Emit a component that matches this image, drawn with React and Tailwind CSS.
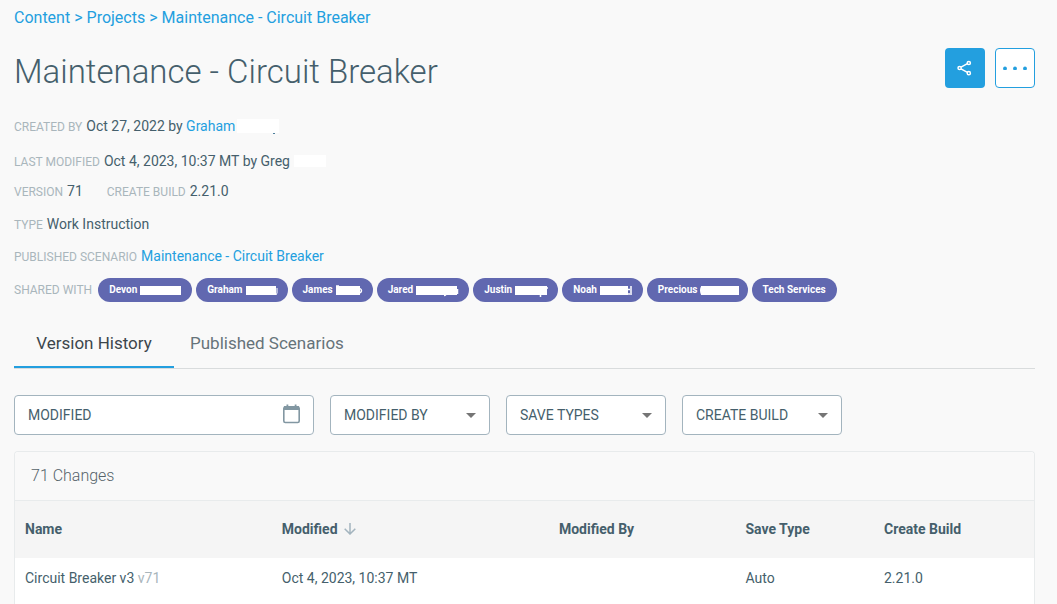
// src/App.jsx
import React, { useState } from 'react';

const sharedWith = [
  { name: 'Devon', mask: 41 },
  { name: 'Graham', mask: 30, tail: <path d="M31 2v5l-1 2" stroke="currentColor" strokeWidth="1" fill="none" />, extra: 1 },
  { name: 'James', mask: 24, tail: <path d="M24 2.500q3 2 0 4.500M0 0h3" stroke="currentColor" strokeWidth="1.500" fill="none" />, extra: 2 },
  { name: 'Jared', mask: 41, tail: <path d="M41.500 3v5M28 9.500q2 0 2-2" stroke="currentColor" strokeWidth="1.500" fill="none" />, extra: 1 },
  { name: 'Justin', mask: 32, tail: <path d="M25.500 8v3M32 1v2" stroke="currentColor" strokeWidth="1.500" fill="none" />, extra: 0 },
  { name: 'Noah', mask: 28, tail: <path d="M31 0v9M28 3.500h2M28 8h2" stroke="currentColor" strokeWidth="1.500" fill="none" />, extra: 4 },
  { name: 'Precious', mask: 38, tail: <path d="M0.500 1q-1.500 3 0 7" stroke="currentColor" strokeWidth="1.500" fill="none" />, extra: -2 },
  { name: 'Tech Services' },
];

const selects = ['MODIFIED BY', 'SAVE TYPES', 'CREATE BUILD'];

const changes = [
  { name: 'Circuit Breaker v3', version: 'v71', modified: 'Oct 4, 2023, 10:37 MT', by: '', saveType: 'Auto', build: '2.21.0' },
];

const Label = ({ children }) => <span className="mr-1 text-xs text-[#a9b6bc]">{children}</span>;

const Chip = ({ name, mask, tail, extra = 0 }) => (
  <li className="flex h-6 items-center gap-[3px] rounded-full bg-[#6168b0] px-[11px] text-[10px] font-bold text-white">
    {name}
    {mask && (
      <svg width={mask + extra} height="9" className="overflow-visible" aria-hidden="true">
        <rect width={mask} height="9" fill="currentColor" />
        {tail}
      </svg>
    )}
  </li>
);

const FilterSelect = ({ label }) => (
  <div className="relative w-40">
    <select
      aria-label={label}
      className="h-10 w-full appearance-none rounded-[4px] border border-[#a3b4be] bg-white px-[13px] text-sm text-[#455f6c]"
    >
      <option>{label}</option>
    </select>
    <svg className="pointer-events-none absolute top-[18px] right-3.5" width="10" height="5" viewBox="0 0 10 5" aria-hidden="true">
      <path d="M0 0h10L5 5z" fill="#757575" />
    </svg>
  </div>
);

const App = () => {
  const [activeTab, setActiveTab] = useState('history'); // 'history' or 'scenarios'

  const tabClass = (tab) =>
    `h-[50px] border-b-2 px-4 pt-0.5 text-[17px] ${
      activeTab === tab ? 'min-w-[160px] border-[#239fdf] text-[#3c464c]' : 'border-transparent text-[#66737a]'
    }`;

  return (
    <div className="flex min-h-screen flex-col bg-[#f9f9f9] pr-[22px] pl-3.5 font-['Roboto',sans-serif] text-sm text-[#455f6c]">
      <nav className="flex gap-1 pt-1.5 text-base text-[#239fdf]">
        <a href="#content">Content</a>
        <span>&gt;</span>
        <a href="#projects">Projects</a>
        <span>&gt;</span>
        <a href="#project">Maintenance - Circuit Breaker</a>
      </nav>

      <header className="mt-[18px] flex items-start justify-between">
        <h1 className="text-[33px] leading-[48px] font-light">Maintenance - Circuit Breaker</h1>
        <div className="flex gap-2.5">
          <button aria-label="Share" className="flex size-10 items-center justify-center rounded-[4px] bg-[#239fdf] text-white">
            <svg width="16" height="16" viewBox="0 0 16 16" fill="none" stroke="currentColor" strokeWidth="1.500">
              <circle cx="2.600" cy="8" r="1.600" />
              <circle cx="11.800" cy="3" r="1.600" />
              <circle cx="11.800" cy="13.200" r="1.600" />
              <path d="M4 7.200l6.400-3.500M4 8.800l6.400 3.600" />
            </svg>
          </button>
          <button aria-label="More" className="flex size-10 items-center justify-center rounded-[4px] border border-[#239fdf] bg-white text-[#239fdf]">
            <svg width="24" height="4" viewBox="0 0 24 4" fill="currentColor">
              <circle cx="2" cy="2.500" r="1.900" />
              <circle cx="12" cy="2.500" r="1.900" />
              <circle cx="22" cy="2.500" r="1.900" />
            </svg>
          </button>
        </div>
      </header>

      <section className="mt-[18px]">
        <div className="flex h-6 items-center">
          <p>
            <Label>CREATED BY</Label>Oct 27, 2022 by <a href="#graham" className="text-[#239fdf]">Graham</a>
          </p>
          <svg width="42" height="15" className="ml-0.5 overflow-visible" aria-hidden="true">
            <rect width="42" height="14" fill="#fff" />
            <path d="M36 14.500h2" stroke="#4d7f9c" />
          </svg>
        </div>
        <div className="mt-[11px] flex h-6 items-center">
          <p>
            <Label>LAST MODIFIED</Label>Oct 4, 2023, 10:37 MT by Greg
          </p>
          <span className="ml-1 h-3 w-8 bg-white" />
        </div>
        <div className="mt-1.5 flex h-6 items-center gap-6">
          <p><Label>VERSION</Label>71</p>
          <p><Label>CREATE BUILD</Label>2.21.0</p>
        </div>
        <div className="mt-[9px] flex h-6 items-center">
          <p><Label>TYPE</Label>Work Instruction</p>
        </div>
        <div className="mt-2 flex h-6 items-center">
          <p>
            <Label>PUBLISHED SCENARIO</Label>
            <a href="#scenario" className="text-[#239fdf]">Maintenance - Circuit Breaker</a>
          </p>
        </div>
        <div className="mt-2.5 flex items-center">
          <Label>SHARED WITH</Label>
          <ul className="ml-0.5 flex gap-1">
            {sharedWith.map((person) => (
              <Chip key={person.name} {...person} />
            ))}
          </ul>
        </div>
      </section>

      {/* Tab navigation */}
      <div className="mt-4 flex border-b border-[#d9dcdd]">
        <button className={tabClass('history')} onClick={() => setActiveTab('history')}>
          Version History
        </button>
        <button className={tabClass('scenarios')} onClick={() => setActiveTab('scenarios')}>
          Published Scenarios
        </button>
      </div>

      {/* Filters */}
      <div className="mt-[26px] flex gap-4">
        <div className="relative w-[300px]">
          <input
            type="text"
            aria-label="Modified"
            placeholder="MODIFIED"
            className="h-10 w-full rounded-[4px] border border-[#a3b4be] bg-white px-[13px] text-sm placeholder:text-[#455f6c]"
          />
          <svg className="pointer-events-none absolute top-[9px] right-3.5" width="17" height="20" viewBox="0 0 17 20" aria-hidden="true">
            <rect x="0.800" y="3" width="15.400" height="15.500" rx="1.500" fill="none" stroke="#8297a2" strokeWidth="1.600" />
            <path d="M1 2h15v4H1zM3.500 0.500h1.800V3H3.500zM11.700 0.500h1.800V3h-1.800z" fill="#8297a2" />
          </svg>
        </div>
        {selects.map((label) => (
          <FilterSelect key={label} label={label} />
        ))}
      </div>

      {/* Changes table */}
      <section className="mt-4 flex-1 rounded-t-[4px] border border-b-0 border-[#e8ebec] bg-white">
        <h2 className="flex h-12 items-center rounded-t-[4px] bg-[#f9f9f9] px-4 text-base font-light text-[#56636a]">71 Changes</h2>
        <table className="w-full table-fixed border-t border-[#e8ebec] text-left">
          <thead className="bg-[#f5f5f5]">
            <tr className="h-[57px]">
              <th className="w-[25.2%] pl-2.5 font-bold">Name</th>
              <th className="w-[27.2%] pl-2.5 font-bold">
                <span className="flex items-center gap-1.5">
                  Modified
                  <svg width="12" height="12" viewBox="0 0 12 12" fill="none" stroke="#a3b4be" strokeWidth="1.500" aria-hidden="true">
                    <path d="M6 0v11M0.700 5.700L6 11l5.300-5.300" />
                  </svg>
                </span>
              </th>
              <th className="w-[18.3%] pl-2.5 font-bold">Modified By</th>
              <th className="w-[13.6%] pl-2.5 font-bold">Save Type</th>
              <th className="pl-2.5 font-bold">Create Build</th>
            </tr>
          </thead>
          <tbody>
            {changes.map((change) => (
              <tr key={change.version} className="h-10">
                <td className="pl-2.5">
                  {change.name} <span className="text-[#a9b6bc]">{change.version}</span>
                </td>
                <td className="pl-2.5">{change.modified}</td>
                <td className="pl-2.5">{change.by}</td>
                <td className="pl-2.5">{change.saveType}</td>
                <td className="pl-2.5">{change.build}</td>
              </tr>
            ))}
          </tbody>
        </table>
      </section>
    </div>
  );
};

export default App;
